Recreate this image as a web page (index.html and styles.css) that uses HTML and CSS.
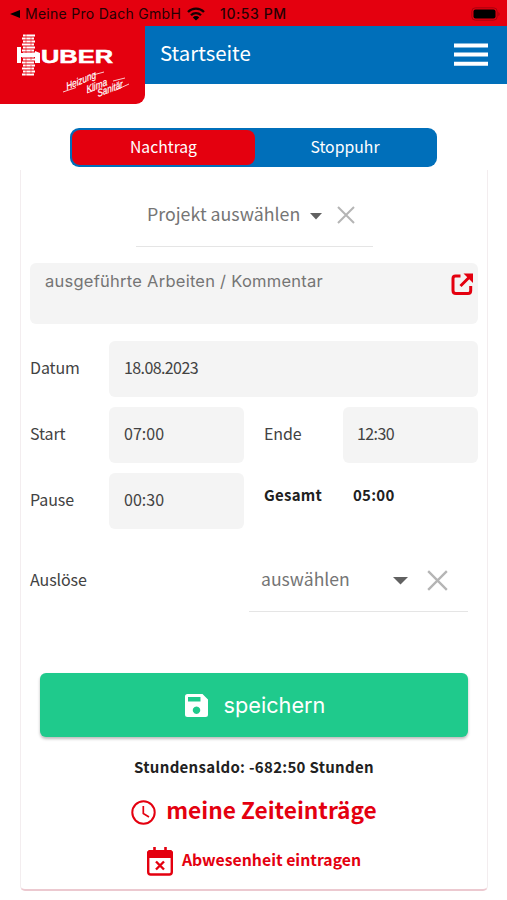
FILE: index.html
```html
<!DOCTYPE html>
<html lang="de">
<head>
<meta charset="utf-8">
<meta name="viewport" content="width=device-width, initial-scale=1">
<title>Startseite</title>
<link rel="stylesheet" href="styles.css">
</head>
<body>
<div class="statusbar">
  <svg class="back" width="10" height="8" viewBox="0 0 10 8"><path d="M0 4 10 0v8z"/></svg>
  <span class="back-app">Meine Pro Dach GmbH</span>
  <svg class="wifi" width="18" height="14" viewBox="0 0 18 14"><g fill="none" stroke="#160002" stroke-width="2.3"><path d="M1 5a11.3 11.3 0 0 1 16 0"/><path d="M4 8.2a7 7 0 0 1 10 0"/></g><path d="M9 13.6 5.8 10.4a4.5 4.5 0 0 1 6.4 0z"/></svg>
  <span class="clock">10:53 PM</span>
  <svg class="battery" width="30" height="14" viewBox="0 0 30 14"><rect x=".8" y=".8" width="25.4" height="12.4" rx="3.6" fill="none" stroke="#a9000e"/><rect x="2.5" y="2.5" width="22" height="9" rx="2"/><path d="M27.5 4.7q2 2.3 0 4.6z" fill="#96000b"/></svg>
</div>
<header class="header">
  <h1 class="title">Startseite</h1>
  <svg class="menu" width="34" height="24" viewBox="0 0 34 24"><path d="M0 2.4h34M0 11.6h34M0 20.8h34" stroke="#fff" stroke-width="4"/></svg>
  <div class="logo">
    <svg width="145" height="104" viewBox="0 0 145 104">
      <g stroke="#fff" fill="none">
        <path stroke-width="2" d="M23 35.500h12M22 38.500h12M23 41.500h12M22 44.500h12M23 47.500h12M22 50.500h12M23 53.500h12M22 56.500h12M23 59.500h12M22 62.500h12M23 65.500h12M22 68.500h12M23 71.500h12M22 74.500h12"/>
        <path stroke="#e4000f" stroke-width=".5" d="M26 34v9m5-6v9m-5 0v9m5-5v10m-5-2v10m5-3v9m-5-4v6"/>
      </g>
      <g fill="#fff">
        <path d="M17 47h4v6h14v-2l5 2v10h-5v-6H21v6h-4z"/>
        <text x="41" y="63" class="brand" stroke="#fff" stroke-width=".5" textLength="72" lengthAdjust="spacingAndGlyphs">UBER</text>
      </g>
      <g class="script" fill="#fff" stroke="#fff" stroke-width=".2">
        <text transform="translate(67 90) rotate(-23) skewX(-12)" textLength="32" lengthAdjust="spacingAndGlyphs">Heizung</text>
        <text transform="translate(87 93) rotate(-21) skewX(-12)" textLength="22" lengthAdjust="spacingAndGlyphs">Klima</text>
        <text transform="translate(98 97) rotate(-21) skewX(-12)" textLength="27" lengthAdjust="spacingAndGlyphs">Sanitär</text>
      </g>
      <path stroke="#fff" stroke-width=".8" fill="none" d="M63 92 76 87.500M93 75l11-3M87 93l8-3M116 90l13-6M113 81l12-3"/>
    </svg>
  </div>
</header>
<main class="page">
  <div class="tabs">
    <div class="tab active"><span class="t-nach">Nachtrag</span></div>
    <div class="tab"><span class="t-stop">Stoppuhr</span></div>
  </div>
  <section class="card">
    <div class="select project">
      <span class="select-label">Projekt auswählen</span>
      <svg class="caret" width="12" height="7" viewBox="0 0 12 7"><path d="M0 0h12L6 6.500z"/></svg>
      <svg class="clear" width="18" height="18" viewBox="0 0 18 18"><path d="m1 1 16 16M17 1 1 17"/></svg>
    </div>
    <div class="comment">
      <span class="comment-hint">ausgeführte Arbeiten / Kommentar</span>
      <svg class="open" width="23" height="23" viewBox="0 0 23 23"><path d="M9.500 3H4.500Q2 3 2 5.500v12Q2 20.500 5 20.500h12Q19.700 20.500 19.700 17.500v-4.500M9.500 13 19 3.500" fill="none" stroke="#e4000f" stroke-width="3"/><path d="M12.500.500H22v9.500z" fill="#e4000f"/></svg>
    </div>
    <div class="grid">
      <span class="label">Datum</span>
      <div class="field wide">18.08.2023</div>
      <span class="label">Start</span>
      <div class="field">07:00</div>
      <span class="label">Ende</span>
      <div class="field end">12:30</div>
      <span class="label">Pause</span>
      <div class="field">00:30</div>
      <strong class="total">Gesamt</strong>
      <strong class="total total-value">05:00</strong>
    </div>
    <div class="allowance">
      <span class="label">Auslöse</span>
      <div class="select rate">
        <span class="select-label">auswählen</span>
        <svg class="caret" width="15" height="8" viewBox="0 0 12 7" preserveAspectRatio="none"><path d="M0 0h12L6 6.500z"/></svg>
        <svg class="clear" width="21" height="21" viewBox="0 0 18 18"><path d="m1 1 16 16M17 1 1 17"/></svg>
      </div>
    </div>
    <div class="save">
      <svg width="23" height="23" viewBox="0 0 23 23"><path fill="#fff" fill-rule="evenodd" d="M2.500 0H17.500L23 5.500v15q0 2.500-2.500 2.500h-18Q0 23 0 20.500v-18Q0 0 2.500 0zM3 3v4.500h12.500V3zM11.500 12.500a3.700 3.700 0 1 0 .01 0z"/></svg>
      <span class="save-text">speichern</span>
    </div>
    <div class="balance">Stundensaldo: -682:50 Stunden</div>
    <div class="link entries">
      <svg width="25" height="25" viewBox="0 0 25 25" fill="none" stroke="#e4000f"><circle cx="12.500" cy="12.500" r="11.200" stroke-width="2"/><path d="M12.300 6v7.500l5.700 3.500" stroke-width="1.700"/></svg>
      <span class="entries-text">meine Zeiteinträge</span>
    </div>
    <div class="link absence">
      <svg width="26" height="29" viewBox="0 0 26 29"><path d="M7.500 0v5M18.500 0v5" stroke="#e4000f" stroke-width="2.600"/><rect x="1.200" y="4.200" width="23.600" height="23.300" rx="2.500" fill="none" stroke="#e4000f" stroke-width="2.400"/><path d="M2 3h22l2 2v6H0V5z" fill="#e4000f"/><path d="m9 14.500 8 8M17 14.500l-8 8" stroke="#e4000f" stroke-width="2.400"/></svg>
      <span class="absence-text">Abwesenheit eintragen</span>
    </div>
  </section>
</main>
</body>
</html>
```
FILE: styles.css
```css
* { box-sizing: border-box; }
body {
  margin: 0;
  height: 900px;
  overflow: hidden;
  background: #fff;
  color: #424242;
  font: 16px/24px "Noto Sans CJK SC", "Noto Sans", sans-serif;
}
svg { display: block; flex: none; }
span, strong, .balance { white-space: nowrap; }
.statusbar {
  height: 26px;
  display: flex;
  align-items: center;
  padding: 2px 6px 0 10px;
  background: #e4000f;
  color: #270003;
  font-family: Inter, sans-serif;
  font-size: 14px;
}
.back-app { margin-left: 5px; letter-spacing: .28px; }
.wifi { margin-left: 6px; }
.clock { margin-left: 15px; font-weight: 500; letter-spacing: .55px; }
.battery { margin-left: auto; }
.header {
  position: relative;
  height: 58px;
  display: flex;
  align-items: center;
  padding: 0 19px 0 160px;
  background: #006fba;
}
.title { margin: -7px 0 0; color: #fff; font-size: 20.4px; font-weight: 400; line-height: 30px; }
.menu { margin-left: auto; }
.logo {
  position: absolute;
  left: 0;
  top: -26px;
  width: 145px;
  height: 104px;
  clip-path: inset(26px 0 0 0 round 0 0 9px 0);
  background: #e4000f;
}
.brand { font: bold 18px "Liberation Sans", sans-serif; }
.script text { font: italic 10px "Liberation Sans", sans-serif; }
.page { padding: 44px 19px 0 20px; }
.tabs {
  display: flex;
  width: 367px;
  height: 39px;
  margin-left: 50px;
  padding: 2px;
  border-radius: 9px;
  background: #006fba;
}
.tab {
  flex: 1;
  display: flex;
  align-items: center;
  justify-content: center;
  padding-bottom: 2px;
  border-radius: 8px;
  color: #fff;
}
.tab.active { flex: 0 0 183px; background: #e4000f; }
.t-nach { font-size: 15.7px; }
.t-stop { font-size: 15.8px; }
.card {
  height: 721px;
  margin-top: 3px;
  padding: 20px 9px 0;
  border: solid #f3edef;
  border-width: 0 1px 2px;
  border-bottom-color: #ecc9d0;
  border-radius: 0 0 5px 5px;
}
.select { display: flex; align-items: center; border-bottom: 1px solid #e5e5e5; color: #757575; }
.select-label { margin-top: -4px; font-size: 17.8px; }
.caret { fill: #616161; }
.clear { fill: none; stroke: #b5b5b5; stroke-width: 2; }
.project { width: 237px; height: 57px; margin-left: 106px; padding: 0 0 7px 11px; }
.project .caret { margin: 3px 0 0 10px; }
.project .clear { margin-left: 15px; }
.comment {
  display: flex;
  justify-content: space-between;
  height: 61px;
  margin-top: 16px;
  padding: 7px 4px 0 15px;
  border-radius: 6px;
  background: #f4f4f4;
  color: #757575;
}
.comment-hint { margin-top: -1px; font: 16.5px/24px Inter, sans-serif; letter-spacing: .25px; }
.open { margin-top: 3px; }
.grid {
  display: grid;
  grid-template-columns: 79px 135px 99px 135px;
  grid-template-rows: repeat(3, 56px);
  row-gap: 10px;
  margin-top: 17px;
  align-items: center;
}
.label { letter-spacing: -.1px; }
.grid .label { margin-top: -4px; }
.field {
  height: 56px;
  padding-left: 15px;
  border-radius: 6px;
  background: #f4f4f4;
  line-height: 53px;
  letter-spacing: .05px;
}
.wide { grid-column: 2 / 5; letter-spacing: -.6px; }
.end { padding-left: 14px; letter-spacing: -.6px; }
.grid .label:nth-of-type(3), .total { padding-left: 20px; }
.total { align-self: start; padding-top: 10px; color: #212121; font-size: 15px; letter-spacing: .25px; }
.total-value { padding-left: 10px; }
.allowance { display: flex; justify-content: space-between; height: 64px; margin-top: 19px; padding-right: 10px; }
.allowance > .label { padding-top: 19px; }
.rate { width: 219px; padding: 0 20px 0 12px; }
.rate .select-label { margin-top: -2px; font-size: 17.6px; }
.rate .caret { margin: 2px 0 0 auto; }
.rate .clear { margin: 2px 0 0 19px; }
.save {
  display: flex;
  align-items: center;
  justify-content: center;
  height: 64px;
  margin: 61px 10px 0;
  border-radius: 6px;
  background: #1fca8c;
  box-shadow: 0 2px 3px #0004;
  color: #fff;
}
.save svg { margin-left: 2px; }
.save-text { margin-left: 16px; font: 21.7px/30px Inter, sans-serif; }
.balance { margin-top: 18px; text-align: center; color: #212121; font-weight: 700; font-size: 15px; letter-spacing: .3px; }
.link { display: flex; align-items: center; justify-content: center; color: #e4000f; font-weight: 700; }
.entries { height: 34px; margin-top: 16px; }
.entries-text { margin: -4px 0 0 10px; font-size: 22.7px; line-height: 34px; }
.absence { height: 30px; margin-top: 17px; }
.absence-text { margin: -2px 0 0 9px; font-size: 15.8px; }
```
